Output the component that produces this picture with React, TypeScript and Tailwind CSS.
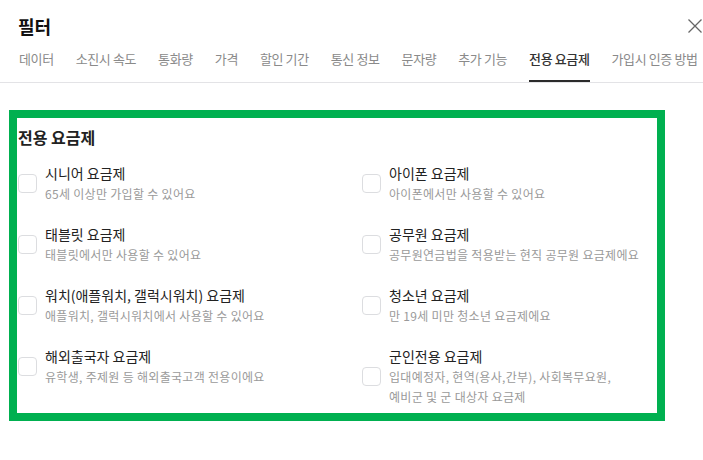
const tabs = [
  "데이터",
  "소진시 속도",
  "통화량",
  "가격",
  "할인 기간",
  "통신 정보",
  "문자량",
  "추가 기능",
  "전용 요금제",
  "가입시 인증 방법",
];

type Plan = { title: string; desc: React.ReactNode };

const plans: Plan[] = [
  { title: "시니어 요금제", desc: "65세 이상만 가입할 수 있어요" },
  { title: "아이폰 요금제", desc: "아이폰에서만 사용할 수 있어요" },
  { title: "태블릿 요금제", desc: "태블릿에서만 사용할 수 있어요" },
  { title: "공무원 요금제", desc: "공무원연금법을 적용받는 현직 공무원 요금제에요" },
  { title: "워치(애플워치, 갤럭시워치) 요금제", desc: "애플워치, 갤럭시워치에서 사용할 수 있어요" },
  { title: "청소년 요금제", desc: "만 19세 미만 청소년 요금제에요" },
  { title: "해외출국자 요금제", desc: "유학생, 주제원 등 해외출국고객 전용이에요" },
  {
    title: "군인전용 요금제",
    desc: (
      <>
        입대예정자, 현역(용사,간부), 사회복무요원,
        <br />
        예비군 및 군 대상자 요금제
      </>
    ),
  },
];

function PlanItem({ plan }: { plan: Plan }) {
  return (
    <label className="flex items-center gap-[8px]">
      <span className="w-[19px] h-[19px] shrink-0 rounded-[4px] border border-[#dcdde0] bg-white" />
      <div className="flex flex-col">
        <span className="text-[14px] leading-[20px] text-[#222]">{plan.title}</span>
        <span className="mt-[1px] text-[12px] leading-[20px] text-[#9a9a9a] tracking-[0.025em]">{plan.desc}</span>
      </div>
    </label>
  );
}

export default function App() {
  return (
    <div
      className="w-[703px] h-[460px] overflow-hidden bg-white"
      style={{ fontFamily: '"Noto Sans CJK KR", "Noto Sans", sans-serif' }}
    >
      <div className="flex items-center justify-between pt-[13px] pl-[18px] pr-[1px]">
        <h1 className="text-[18px] leading-[26px] font-bold text-[#111]">필터</h1>
        <svg width="14" height="14" viewBox="0 0 14 14" className="text-[#666]">
          <path d="M0.5 0.5 L13.5 13.5 M13.5 0.5 L0.5 13.5" stroke="currentColor" strokeWidth="1.3" />
        </svg>
      </div>

      <div className="mt-[10px] flex gap-[22px] pl-[19px] border-b border-[#e3e3e6] whitespace-nowrap">
        {tabs.map((t) => {
          const active = t === "전용 요금제";
          return (
            <div
              key={t}
              className={
                active
                  ? "pb-[11px] border-b-2 border-[#2b2b2b] text-[13px] leading-[20px] text-[#333] font-medium tracking-[-0.03em]"
                  : "pb-[11px] border-b-2 border-transparent text-[13px] leading-[20px] text-[#8a8a8a] tracking-[-0.03em]"
              }
            >
              {t}
            </div>
          );
        })}
      </div>

      <div className="mt-[27px] ml-[9px] w-[656px] h-[311px] border-8 border-[#00b050] pt-[7px] pl-[1px]">
        <h2 className="text-[16px] leading-[24px] font-semibold text-[#222]">전용 요금제</h2>
        <div className="mt-[14px] grid grid-cols-[344px_1fr] gap-y-[20px] items-start">
          {plans.map((p) => (
            <PlanItem key={p.title} plan={p} />
          ))}
        </div>
      </div>
    </div>
  );
}
